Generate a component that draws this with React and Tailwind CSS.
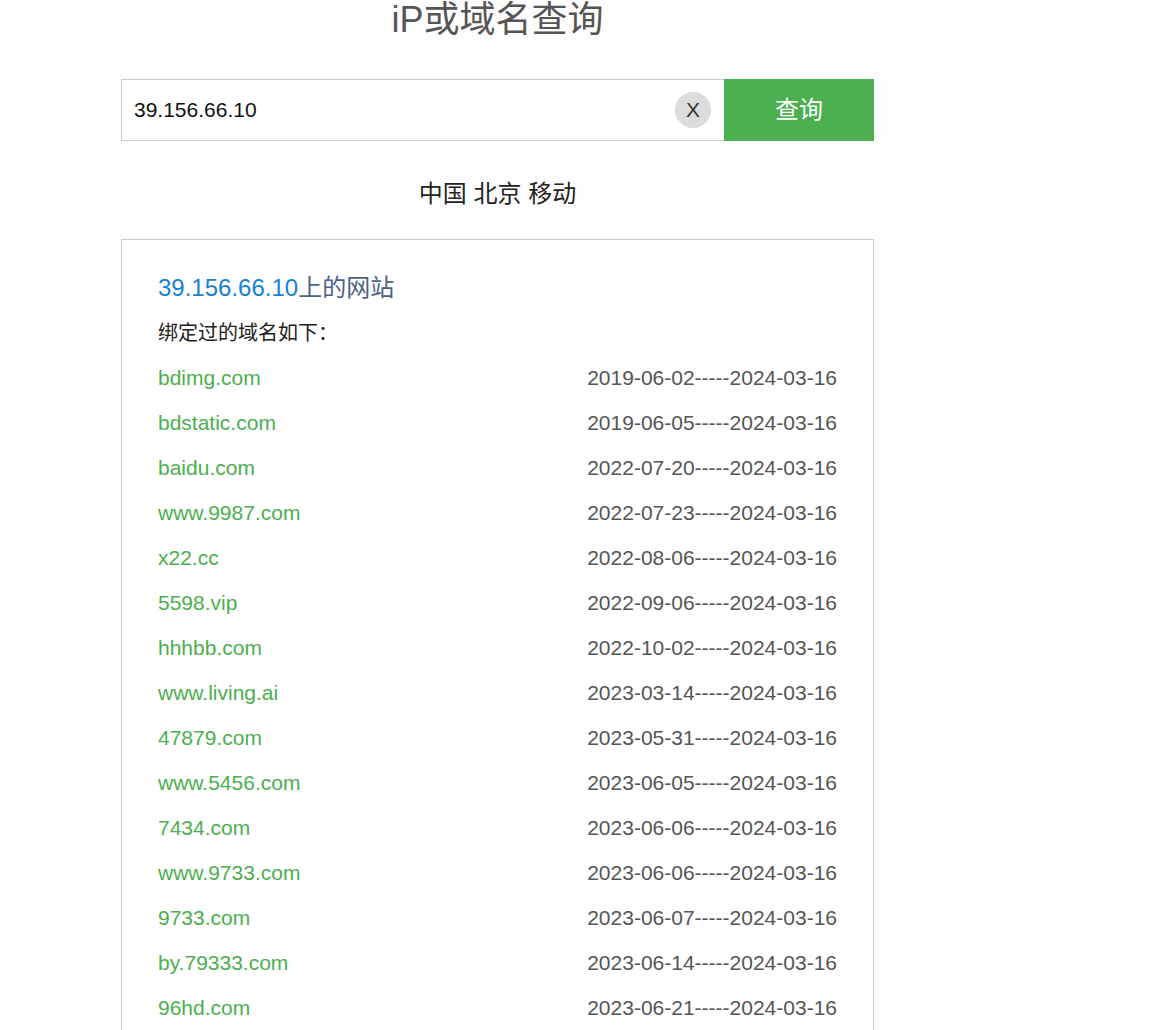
const rows = [
  ['bdimg.com', '2019-06-02'],
  ['bdstatic.com', '2019-06-05'],
  ['baidu.com', '2022-07-20'],
  ['www.9987.com', '2022-07-23'],
  ['x22.cc', '2022-08-06'],
  ['5598.vip', '2022-09-06'],
  ['hhhbb.com', '2022-10-02'],
  ['www.living.ai', '2023-03-14'],
  ['47879.com', '2023-05-31'],
  ['www.5456.com', '2023-06-05'],
  ['7434.com', '2023-06-06'],
  ['www.9733.com', '2023-06-06'],
  ['9733.com', '2023-06-07'],
  ['by.79333.com', '2023-06-14'],
  ['96hd.com', '2023-06-21'],
]

export default function App() {
  return (
    <div
      className="h-[1030px] overflow-hidden bg-[#fdfdfd]"
      style={{ fontFamily: '"Liberation Sans", Arial, "Noto Sans CJK SC", sans-serif' }}
    >
      <div className="ml-[121px] w-[753px]">
        <h1 className="h-[40px] text-center text-[36px] leading-[40px] font-normal text-[#555]">iP或域名查询</h1>

        <div className="mt-[39px] flex h-[62px]">
          <div className="flex flex-1 items-center border border-r-0 border-[#ccc] bg-white pl-[12px] pr-[13px]">
            <span className="flex-1 text-[21px] text-[#111]">39.156.66.10</span>
            <span className="flex h-[36px] w-[36px] items-center justify-center rounded-full bg-[#dcdcdc] text-[21px] text-[#333]">
              X
            </span>
          </div>
          <button className="w-[150px] bg-[#4caf50] text-[24px] text-white">查询</button>
        </div>

        <div className="mt-[41px] text-center text-[24px] leading-[24px] text-[#222]">中国 北京 移动</div>

        <div className="mt-[33px] border border-[#ccc] bg-white px-[36px] pt-[33px] pb-[20px]">
          <h2 className="text-[24px] leading-[30px] font-normal text-[#4a6288]">
            <span className="text-[#1b7fd0]">39.156.66.10</span>上的网站
          </h2>
          <p className="mt-[15px] text-[20px] leading-[30px] text-[#222]">绑定过的域名如下：</p>
          <div className="mt-[7px]">
            {rows.map(([d, s]) => (
              <div key={d} className="flex h-[45px] items-center justify-between text-[21px]">
                <span className="text-[#4caf50]">{d}</span>
                <span className="text-[#555]">{s}-----2024-03-16</span>
              </div>
            ))}
          </div>
        </div>
      </div>
    </div>
  )
}
